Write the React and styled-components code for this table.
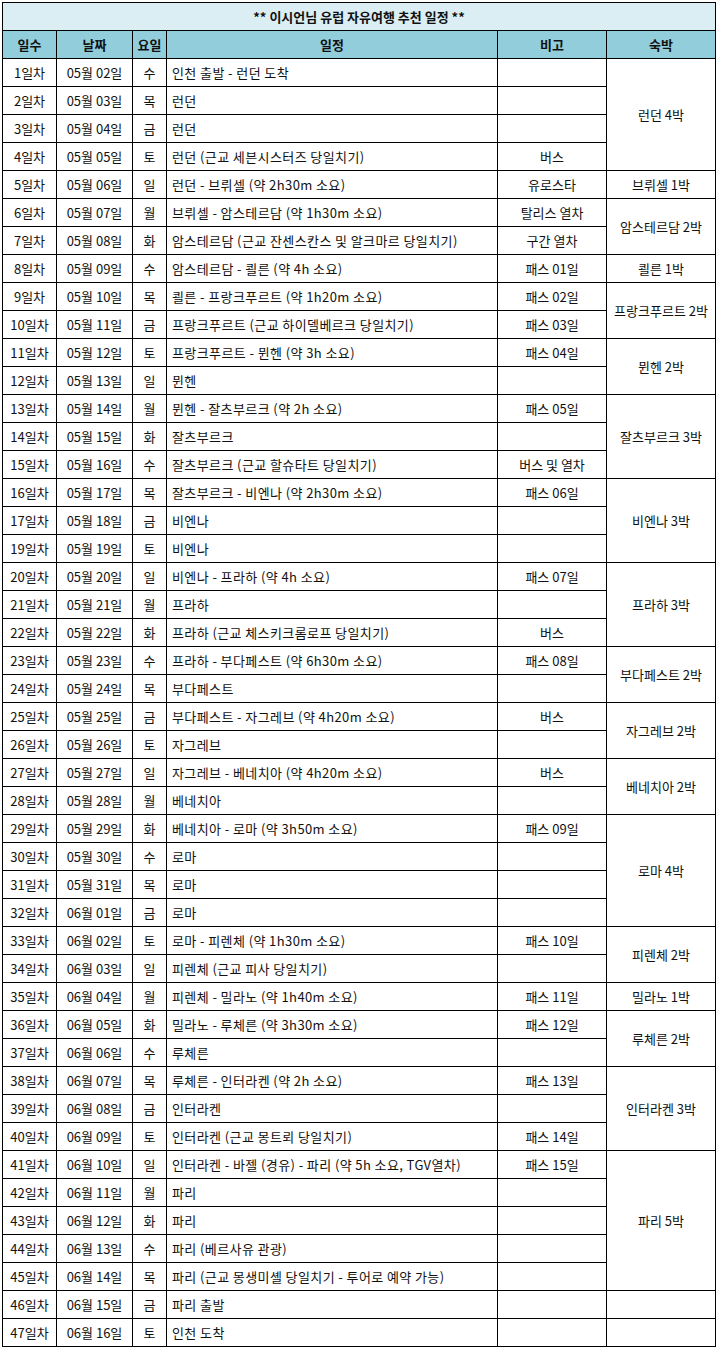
import styled, { createGlobalStyle } from "styled-components";

const GlobalStyle = createGlobalStyle`
  html, body {
    margin: 0;
    padding: 0;
    background: #fff;
  }
  body {
    font-family: "Noto Sans CJK KR", "Noto Sans", sans-serif;
  }
`;

// 숙박 merges: label shown in first row, span = number of rows
const rows = [
  { no: 1, date: "05월 02일", dow: "수", plan: "인천 출발 - 런던 도착", note: "", stay: "런던 4박", span: 4 },
  { no: 2, date: "05월 03일", dow: "목", plan: "런던", note: "" },
  { no: 3, date: "05월 04일", dow: "금", plan: "런던", note: "" },
  { no: 4, date: "05월 05일", dow: "토", plan: "런던 (근교 세븐시스터즈 당일치기)", note: "버스" },
  { no: 5, date: "05월 06일", dow: "일", plan: "런던 - 브뤼셀 (약 2h30m 소요)", note: "유로스타", stay: "브뤼셀 1박", span: 1 },
  { no: 6, date: "05월 07일", dow: "월", plan: "브뤼셀 - 암스테르담 (약 1h30m 소요)", note: "탈리스 열차", stay: "암스테르담 2박", span: 2 },
  { no: 7, date: "05월 08일", dow: "화", plan: "암스테르담 (근교 잔센스칸스 및 알크마르 당일치기)", note: "구간 열차" },
  { no: 8, date: "05월 09일", dow: "수", plan: "암스테르담 - 쾰른 (약 4h 소요)", note: "패스 01일", stay: "쾰른 1박", span: 1 },
  { no: 9, date: "05월 10일", dow: "목", plan: "쾰른 - 프랑크푸르트 (약 1h20m 소요)", note: "패스 02일", stay: "프랑크푸르트 2박", span: 2 },
  { no: 10, date: "05월 11일", dow: "금", plan: "프랑크푸르트 (근교 하이델베르크 당일치기)", note: "패스 03일" },
  { no: 11, date: "05월 12일", dow: "토", plan: "프랑크푸르트 - 뮌헨 (약 3h 소요)", note: "패스 04일", stay: "뮌헨 2박", span: 2 },
  { no: 12, date: "05월 13일", dow: "일", plan: "뮌헨", note: "" },
  { no: 13, date: "05월 14일", dow: "월", plan: "뮌헨 - 잘츠부르크 (약 2h 소요)", note: "패스 05일", stay: "잘츠부르크 3박", span: 3 },
  { no: 14, date: "05월 15일", dow: "화", plan: "잘츠부르크", note: "" },
  { no: 15, date: "05월 16일", dow: "수", plan: "잘츠부르크 (근교 할슈타트 당일치기)", note: "버스 및 열차" },
  { no: 16, date: "05월 17일", dow: "목", plan: "잘츠부르크 - 비엔나 (약 2h30m 소요)", note: "패스 06일", stay: "비엔나 3박", span: 3 },
  { no: 17, date: "05월 18일", dow: "금", plan: "비엔나", note: "" },
  { no: 19, date: "05월 19일", dow: "토", plan: "비엔나", note: "" },
  { no: 20, date: "05월 20일", dow: "일", plan: "비엔나 - 프라하 (약 4h 소요)", note: "패스 07일", stay: "프라하 3박", span: 3 },
  { no: 21, date: "05월 21일", dow: "월", plan: "프라하", note: "" },
  { no: 22, date: "05월 22일", dow: "화", plan: "프라하 (근교 체스키크롬로프 당일치기)", note: "버스" },
  { no: 23, date: "05월 23일", dow: "수", plan: "프라하 - 부다페스트 (약 6h30m 소요)", note: "패스 08일", stay: "부다페스트 2박", span: 2 },
  { no: 24, date: "05월 24일", dow: "목", plan: "부다페스트", note: "" },
  { no: 25, date: "05월 25일", dow: "금", plan: "부다페스트 - 자그레브 (약 4h20m 소요)", note: "버스", stay: "자그레브 2박", span: 2 },
  { no: 26, date: "05월 26일", dow: "토", plan: "자그레브", note: "" },
  { no: 27, date: "05월 27일", dow: "일", plan: "자그레브 - 베네치아 (약 4h20m 소요)", note: "버스", stay: "베네치아 2박", span: 2 },
  { no: 28, date: "05월 28일", dow: "월", plan: "베네치아", note: "" },
  { no: 29, date: "05월 29일", dow: "화", plan: "베네치아 - 로마 (약 3h50m 소요)", note: "패스 09일", stay: "로마 4박", span: 4 },
  { no: 30, date: "05월 30일", dow: "수", plan: "로마", note: "" },
  { no: 31, date: "05월 31일", dow: "목", plan: "로마", note: "" },
  { no: 32, date: "06월 01일", dow: "금", plan: "로마", note: "" },
  { no: 33, date: "06월 02일", dow: "토", plan: "로마 - 피렌체 (약 1h30m 소요)", note: "패스 10일", stay: "피렌체 2박", span: 2 },
  { no: 34, date: "06월 03일", dow: "일", plan: "피렌체 (근교 피사 당일치기)", note: "" },
  { no: 35, date: "06월 04일", dow: "월", plan: "피렌체 - 밀라노 (약 1h40m 소요)", note: "패스 11일", stay: "밀라노 1박", span: 1 },
  { no: 36, date: "06월 05일", dow: "화", plan: "밀라노 - 루체른 (약 3h30m 소요)", note: "패스 12일", stay: "루체른 2박", span: 2 },
  { no: 37, date: "06월 06일", dow: "수", plan: "루체른", note: "" },
  { no: 38, date: "06월 07일", dow: "목", plan: "루체른 - 인터라켄 (약 2h 소요)", note: "패스 13일", stay: "인터라켄 3박", span: 3 },
  { no: 39, date: "06월 08일", dow: "금", plan: "인터라켄", note: "" },
  { no: 40, date: "06월 09일", dow: "토", plan: "인터라켄 (근교 몽트뢰 당일치기)", note: "패스 14일" },
  { no: 41, date: "06월 10일", dow: "일", plan: "인터라켄 - 바젤 (경유) - 파리 (약 5h 소요, TGV열차)", note: "패스 15일", stay: "파리 5박", span: 5 },
  { no: 42, date: "06월 11일", dow: "월", plan: "파리", note: "" },
  { no: 43, date: "06월 12일", dow: "화", plan: "파리", note: "" },
  { no: 44, date: "06월 13일", dow: "수", plan: "파리 (베르사유 관광)", note: "" },
  { no: 45, date: "06월 14일", dow: "목", plan: "파리 (근교 몽생미셸 당일치기 - 투어로 예약 가능)", note: "" },
  { no: 46, date: "06월 15일", dow: "금", plan: "파리 출발", note: "", stay: "", span: 1 },
  { no: 47, date: "06월 16일", dow: "토", plan: "인천 도착", note: "", stay: "", span: 1 },
];

const Page = styled.div`
  padding: 2px 0 0 2px;
`;

const Table = styled.table`
  border-collapse: collapse;
  table-layout: fixed;
  width: 713px;
  font-size: 13px;
  color: #111;
`;

const Cell = styled.td`
  border: 1px solid #000;
  height: 27px;
  padding: 0 ${(p) => (p.$left ? "5px" : "2px")};
  text-align: ${(p) => (p.$left ? "left" : "center")};
  letter-spacing: ${(p) => (p.$left ? "0.4px" : "0")};
  vertical-align: middle;
  white-space: nowrap;
  overflow: hidden;
  line-height: 1;
`;

const TitleCell = styled(Cell)`
  background: #daeef3;
  font-weight: bold;
`;

const HeadCell = styled(Cell).attrs({ as: "th" })`
  background: #92cddc;
  font-weight: bold;
`;

export default function App() {
  return (
    <>
      <GlobalStyle />
      <Page>
        <Table>
          <colgroup>
            <col style={{ width: 54 }} />
            <col style={{ width: 76 }} />
            <col style={{ width: 34 }} />
            <col style={{ width: 331 }} />
            <col style={{ width: 109 }} />
            <col style={{ width: 109 }} />
          </colgroup>
          <thead>
            <tr>
              <TitleCell colSpan={6}>** 이시언님 유럽 자유여행 추천 일정 **</TitleCell>
            </tr>
            <tr>
              <HeadCell>일수</HeadCell>
              <HeadCell>날짜</HeadCell>
              <HeadCell>요일</HeadCell>
              <HeadCell>일정</HeadCell>
              <HeadCell>비고</HeadCell>
              <HeadCell>숙박</HeadCell>
            </tr>
          </thead>
          <tbody>
            {rows.map((r) => (
              <tr key={r.no}>
                <Cell>{r.no}일차</Cell>
                <Cell>{r.date}</Cell>
                <Cell>{r.dow}</Cell>
                <Cell $left>{r.plan}</Cell>
                <Cell>{r.note}</Cell>
                {r.span !== undefined && <Cell rowSpan={r.span}>{r.stay}</Cell>}
              </tr>
            ))}
          </tbody>
        </Table>
      </Page>
    </>
  );
}
